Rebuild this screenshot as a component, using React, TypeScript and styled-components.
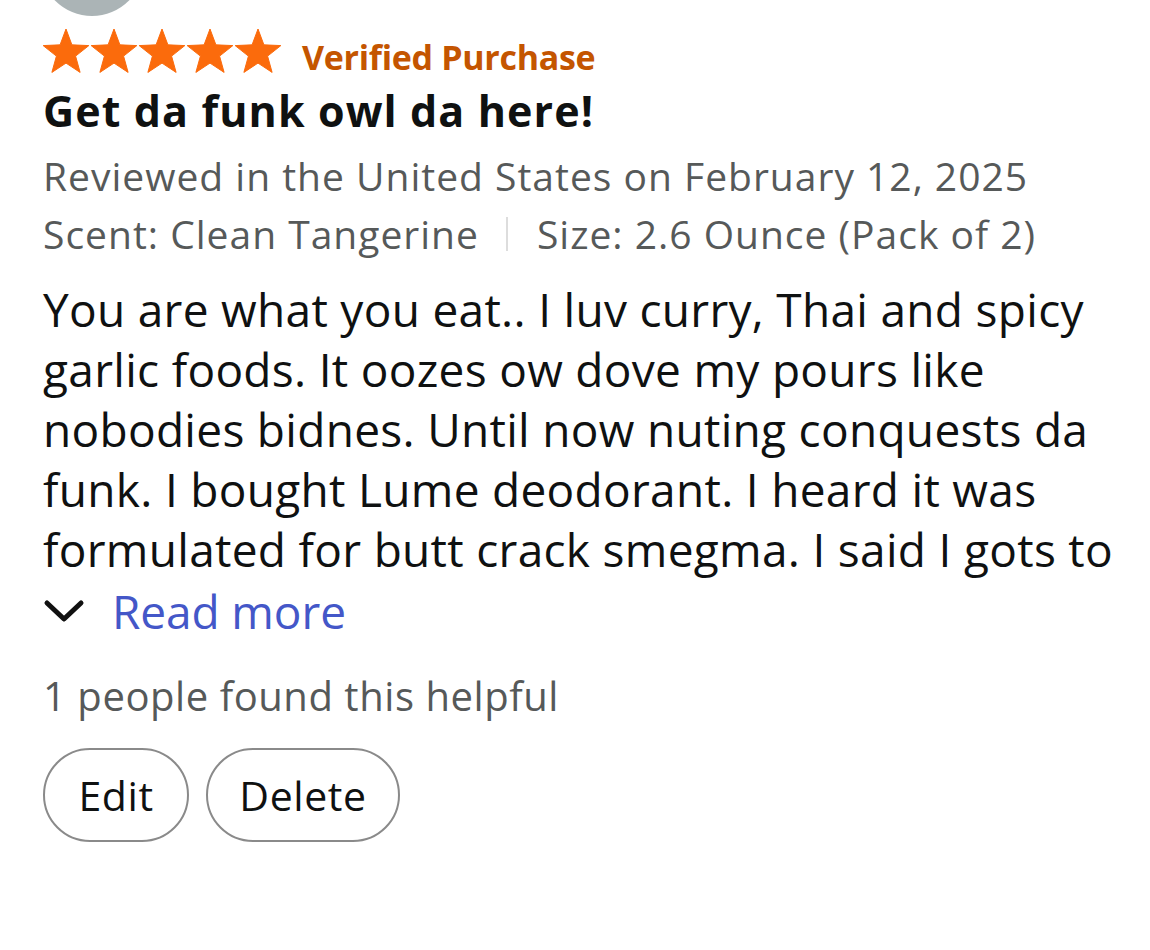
import React from "react";
import styled, { createGlobalStyle } from "styled-components";

const Global = createGlobalStyle`
  html, body { margin: 0; padding: 0; background: #ffffff; }
  body { font-family: "Open Sans", "Noto Sans", sans-serif; -webkit-font-smoothing: antialiased; }
`;

const Page = styled.div`
  width: 1150px;
  height: 950px;
  overflow: hidden;
  position: relative;
  background: #fff;
  padding-left: 43px;
  box-sizing: border-box;
`;

const Avatar = styled.div`
  position: absolute;
  left: 40px;
  top: -88px;
  width: 104px;
  height: 104px;
  border-radius: 50%;
  background: #abb4b6;
`;

const Column = styled.div`
  display: flex;
  flex-direction: column;
  padding-top: 29px;
`;

const RatingRow = styled.div`
  display: flex;
  align-items: flex-start;
  height: 44px;
  gap: 20px;
`;

const Stars = styled.div`
  display: flex;
  margin-left: -1px;
`;

const Verified = styled.span`
  font-size: 34px;
  font-weight: 700;
  color: #c45500;
  letter-spacing: -0.3px;
  line-height: 44px;
  margin-top: 6px;
`;

const Title = styled.div`
  font-size: 43px;
  font-weight: 700;
  color: #0f1111;
  letter-spacing: 1.1px;
  line-height: 50px;
  margin-top: 13px;
  white-space: nowrap;
`;

const Meta = styled.div<{ $gap?: number }>`
  font-size: 39px;
  color: #565959;
  letter-spacing: 1px;
  line-height: 58px;
  display: flex;
  align-items: center;
  white-space: nowrap;
  margin-top: ${(p) => p.$gap ?? 0}px;
`;

const Divider = styled.span`
  display: inline-block;
  width: 2px;
  height: 34px;
  background: #dddddd;
  margin: 0 29px 0 27px;
`;

const Body = styled.div`
  margin-top: 16px;
  font-size: 46px;
  color: #0f1111;
  letter-spacing: 0.3px;
  line-height: 60px;
`;

const Line = styled.div`
  white-space: nowrap;
`;

const ReadMore = styled.div`
  display: flex;
  align-items: center;
  gap: 27px;
  height: 62px;
  margin-top: 1px;
`;

const ReadMoreText = styled.span`
  font-size: 46px;
  line-height: 62px;
  color: #4457c8;
  letter-spacing: -0.1px;
`;

const Helpful = styled.div`
  margin-top: 28px;
  font-size: 40px;
  color: #565959;
  letter-spacing: 0.55px;
  line-height: 52px;
  white-space: nowrap;
`;

const Actions = styled.div`
  display: flex;
  gap: 17px;
  margin-top: 26px;
`;

const Pill = styled.button<{ $w: number }>`
  width: ${(p) => p.$w}px;
  height: 94px;
  border-radius: 47px;
  border: 2px solid #8a8a8a;
  background: #fff;
  font-family: "Open Sans", "Noto Sans", sans-serif;
  font-size: 41px;
  color: #0f1111;
  letter-spacing: 0.6px;
  padding: 0;
  box-sizing: border-box;
`;

const starPoints = (() => {
  const pts: string[] = [];
  const R = 24;
  const r = 24 * 0.42;
  for (let i = 0; i < 10; i++) {
    const a = ((-90 + i * 36) * Math.PI) / 180;
    const rad = i % 2 === 0 ? R : r;
    pts.push(`${(24 + rad * Math.cos(a)).toFixed(2)},${(24 + rad * Math.sin(a)).toFixed(2)}`);
  }
  return pts.join(" ");
})();

const Star = () => (
  <svg width="48" height="44" viewBox="0 0 48 44">
    <polygon points={starPoints} fill="#fb6b0c" strokeLinejoin="round" stroke="#fb6b0c" strokeWidth="1" />
  </svg>
);

const Chevron = () => (
  <svg width="42" height="26" viewBox="0 0 42 26">
    <path d="M4 5 L21 21 L38 5" fill="none" stroke="#111" strokeWidth="5" strokeLinecap="round" strokeLinejoin="round" />
  </svg>
);

const lines = [
  "You are what you eat.. I luv curry, Thai and spicy",
  "garlic foods. It oozes ow dove my pours like",
  "nobodies bidnes. Until now nuting conquests da",
  "funk. I bought Lume deodorant. I heard it was",
  "formulated for butt crack smegma. I said I gots to",
];

export default function App() {
  return (
    <Page>
      <Global />
      <Avatar />
      <Column>
        <RatingRow>
          <Stars>
            <Star />
            <Star />
            <Star />
            <Star />
            <Star />
          </Stars>
          <Verified>Verified Purchase</Verified>
        </RatingRow>
        <Title>Get da funk owl da here!</Title>
        <Meta $gap={11}>Reviewed in the United States on February 12, 2025</Meta>
        <Meta>
          Scent: Clean Tangerine
          <Divider />
          Size: 2.6 Ounce (Pack of 2)
        </Meta>
        <Body>
          {lines.map((l) => (
            <Line key={l}>{l}</Line>
          ))}
        </Body>
        <ReadMore>
          <Chevron />
          <ReadMoreText>Read more</ReadMoreText>
        </ReadMore>
        <Helpful>1 people found this helpful</Helpful>
        <Actions>
          <Pill $w={146}>Edit</Pill>
          <Pill $w={194}>Delete</Pill>
        </Actions>
      </Column>
    </Page>
  );
}
